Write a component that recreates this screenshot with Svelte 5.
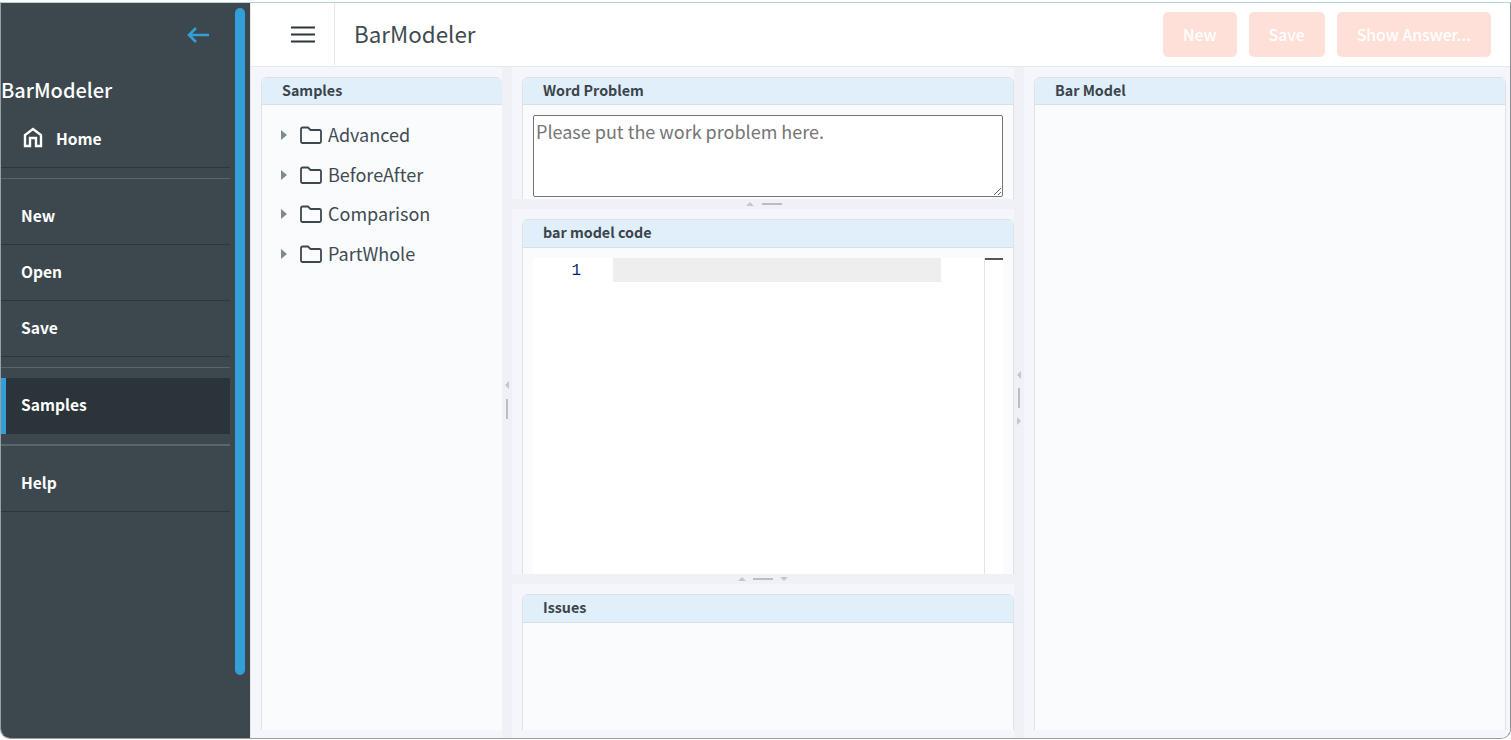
<script>
  const menuTop = ["New", "Open", "Save"];
  const samples = ["Advanced", "BeforeAfter", "Comparison", "PartWhole"];
  const actions = ["New", "Save", "Show Answer..."];
  let problem = $state("");
</script>

<div class="frame">
  <aside class="sidebar">
    <div class="scroll-thumb"></div>
    <div class="side-top">
      <svg width="24" height="18" viewBox="0 0 24 18" fill="none" stroke="#329fd9" stroke-width="2.6">
        <path d="M23 9H3M10 2 3 9l7 7" />
      </svg>
    </div>
    <h2 class="brand">BarModeler</h2>
    <a class="item home" href="#home">
      <svg width="20" height="21" viewBox="0 0 20 21" fill="none" stroke="#fff" stroke-width="2.400">
        <path d="M2 19V8l8-6 8 6v11h-5v-8H7v8z" />
      </svg>
      Home
    </a>
    <hr class="sep" />
    {#each menuTop as label}
      <a class="item" href="#menu">{label}</a>
    {/each}
    <hr class="sep" />
    <a class="item active" href="#samples">Samples</a>
    <hr class="sep thick" />
    <a class="item" href="#help">Help</a>
  </aside>

  <div class="main">
    <header class="topbar">
      <button class="burger" aria-label="Toggle menu">
        <svg width="24" height="17" viewBox="0 0 24 17" fill="none" stroke="#2c363b" stroke-width="2.200">
          <path d="M0 1.500h24M0 8.500h24M0 15.500h24" />
        </svg>
      </button>
      <div class="title">BarModeler</div>
      <div class="actions">
        {#each actions as label}
          <button class="action" disabled>{label}</button>
        {/each}
      </div>
    </header>

    <div class="workspace">
      <section class="pane left">
        <div class="panel">
          <div class="panel-head">Samples</div>
          <ul class="tree">
            {#each samples as name}
              <li>
                <span class="caret"></span>
                <svg width="22" height="18" viewBox="0 0 22 18" fill="none" stroke="#3d474d" stroke-width="1.800">
                  <path d="M2.500 1.500h5.500l2.500 2.500h9a1.500 1.500 0 0 1 1.500 1.500v10a1.500 1.500 0 0 1-1.500 1.500h-17a1.500 1.500 0 0 1-1.500-1.500v-12.500a1.500 1.500 0 0 1 1.500-1.500z" />
                </svg>
                <span class="tree-label">{name}</span>
              </li>
            {/each}
          </ul>
        </div>
      </section>

      <div class="gutter-v">
        <span class="tri-left"></span>
        <span class="grip-v"></span>
      </div>

      <section class="pane-stack">
        <div class="stack-cell word">
          <div class="panel">
            <div class="panel-head">Word Problem</div>
            <div class="word-body">
              <textarea bind:value={problem} placeholder="Please put the work problem here."></textarea>
            </div>
          </div>
        </div>
        <div class="gutter-h first">
          <span class="tri-up"></span>
          <span class="grip-h"></span>
        </div>
        <div class="stack-cell code">
          <div class="panel">
            <div class="panel-head tall">bar model code</div>
            <div class="code-body">
              <div class="editor">
                <div class="line-no">1</div>
                <div class="code-area"><div class="current-line"></div></div>
                <div class="minimap"></div>
              </div>
            </div>
          </div>
        </div>
        <div class="gutter-h">
          <span class="tri-up"></span>
          <span class="grip-h"></span>
          <span class="tri-down"></span>
        </div>
        <div class="stack-cell issues">
          <div class="panel">
            <div class="panel-head tall">Issues</div>
          </div>
        </div>
      </section>

      <div class="gutter-v right-gutter">
        <span class="tri-left"></span>
        <span class="grip-v"></span>
        <span class="tri-right"></span>
      </div>

      <section class="pane right">
        <div class="panel">
          <div class="panel-head">Bar Model</div>
        </div>
      </section>
    </div>
  </div>
</div>

<style>
  :global(body) {
    background: #fff;
    overflow: hidden;
  }

  .frame {
    box-sizing: border-box;
    display: flex;
    height: 737px;
    margin-top: 2px;
    border-top: 1px solid #b4d8d8;
    border-left: 1px solid #9a9fa3;
    border-right: 1px solid #8a8f93;
    border-bottom: 1px solid #9a9fa3;
    border-radius: 0 0 10px 10px;
    overflow: hidden;
    font-family: "Noto Sans CJK SC", "Noto Sans", sans-serif;
  }

  /* sidebar */
  .sidebar {
    position: relative;
    flex: 0 0 249px;
    box-sizing: border-box;
    padding-right: 20px;
    background: #3c484e;
    color: #fff;
  }

  .scroll-thumb {
    position: absolute;
    left: 234px;
    top: 5px;
    width: 10px;
    height: 667px;
    border-radius: 5px;
    background: #329fd9;
  }

  .side-top {
    display: flex;
    justify-content: flex-end;
    height: 65px;
    padding: 23px 20px 0 0;
    box-sizing: border-box;
  }

  .brand {
    margin: 0;
    height: 44px;
    font-size: 20px;
    font-weight: 500;
    line-height: 43px;
  }

  .item {
    display: flex;
    align-items: center;
    gap: 13px;
    box-sizing: border-box;
    height: 56px;
    padding: 0 0 4px 20px;
    border-bottom: 1px solid #2c363b;
    color: #fff;
    font-size: 15.600px;
    font-weight: 700;
    text-decoration: none;
  }

  .home {
    padding-left: 22px;
  }

  .active {
    padding-left: 15px;
    border-bottom: 0;
    border-left: 5px solid #329fd9;
    background: #2a3439;
  }

  .sep {
    margin: 10px 0;
    border: 0;
    height: 1px;
    background: #5b666b;
  }

  .thick {
    height: 2px;
  }

  /* main area */
  .main {
    flex: 1;
    display: flex;
    flex-direction: column;
    min-width: 0;
    border-left: 1px solid #e4e6ea;
    background: #f5f6fb;
  }

  .topbar {
    flex: 0 0 64px;
    box-sizing: border-box;
    display: flex;
    align-items: center;
    padding-bottom: 1px;
    background: #fff;
    border-bottom: 1px solid #e6e8ec;
  }

  .burger {
    flex: 0 0 84px;
    box-sizing: border-box;
    align-self: stretch;
    display: flex;
    align-items: center;
    justify-content: center;
    padding: 0 0 0 20px;
    background: none;
    border: 0;
    border-right: 1px solid #e6e8ec;
  }

  .title {
    flex: 1;
    padding: 0 0 2px 19px;
    color: #3f4b52;
    font-size: 22.400px;
  }

  .actions {
    display: flex;
    gap: 12px;
    padding-right: 19px;
  }

  .action {
    height: 45px;
    padding: 0 20px;
    border: 0;
    border-radius: 5px;
    background: #fee0d8;
    color: #fff;
    font-family: inherit;
    font-size: 15.800px;
    font-weight: 500;
  }

  .workspace {
    flex: 1;
    display: flex;
    min-height: 0;
  }

  .pane {
    box-sizing: border-box;
    padding: 10px 0 8px;
  }

  .left {
    flex: 0 0 251px;
    padding-left: 10px;
  }

  .right {
    flex: 1;
    padding-left: 10px;
    padding-right: 4px;
  }

  .panel {
    display: flex;
    flex-direction: column;
    height: 100%;
    box-sizing: border-box;
    background: #fafbfd;
    border-left: 1px solid #dfe2e6;
    border-right: 1px solid #dfe2e6;
    border-radius: 6px 6px 0 0;
    overflow: hidden;
  }

  .left .panel {
    border-right: 0;
  }

  .panel-head {
    flex: 0 0 28px;
    box-sizing: border-box;
    padding-left: 20px;
    background: #e1effb;
    border-top: 1px solid #dde1e6;
    border-bottom: 1px solid #d9dfe5;
    color: #3b444b;
    font-size: 14.300px;
    font-weight: 700;
    line-height: 24px;
  }

  .tall {
    flex-basis: 29px;
  }

  .tree {
    margin: 0;
    padding: 10px 0 0 19px;
    list-style: none;
    color: #3f4b52;
    font-size: 18px;
  }

  .tree li {
    display: flex;
    align-items: center;
    height: 39.700px;
  }

  .tree-label {
    padding-bottom: 2px;
  }

  .caret {
    width: 0;
    height: 0;
    margin-right: 13px;
    border-left: 6px solid #7d8a90;
    border-top: 5px solid transparent;
    border-bottom: 5px solid transparent;
  }

  .tree svg {
    margin-right: 6px;
  }

  /* splitters */
  .gutter-v {
    flex: 0 0 10px;
    display: flex;
    flex-direction: column;
    align-items: center;
    justify-content: center;
    gap: 10px;
    padding-bottom: 6px;
    box-sizing: border-box;
    background: #f0f1f6;
  }

  .right-gutter {
    gap: 9px;
    padding-bottom: 10px;
  }

  .grip-v {
    width: 2px;
    height: 20px;
    background: #bbbdc2;
  }

  .tri-left {
    border-right: 4px solid #c5c7cb;
    border-top: 4px solid transparent;
    border-bottom: 4px solid transparent;
  }

  .tri-right {
    border-left: 4px solid #c5c7cb;
    border-top: 4px solid transparent;
    border-bottom: 4px solid transparent;
  }

  .pane-stack {
    flex: 0 0 502px;
    display: flex;
    flex-direction: column;
    background: #f5f6fb;
  }

  .stack-cell {
    box-sizing: border-box;
    padding: 10px 0 0 10px;
    min-height: 0;
  }

  .word {
    flex: 0 0 132px;
  }

  .code {
    flex: 0 0 365px;
  }

  .issues {
    flex: 1;
    padding-bottom: 8px;
  }

  .gutter-h {
    flex: 0 0 10px;
    display: flex;
    align-items: center;
    justify-content: center;
    gap: 7px;
    background: #f0f1f6;
  }

  .first {
    gap: 8px;
    padding-left: 2px;
  }

  .grip-h {
    width: 20px;
    height: 2px;
    background: #bbbdc2;
  }

  .tri-up {
    border-bottom: 4px solid #c5c7cb;
    border-left: 4px solid transparent;
    border-right: 4px solid transparent;
  }

  .tri-down {
    border-top: 4px solid #c5c7cb;
    border-left: 4px solid transparent;
    border-right: 4px solid transparent;
  }

  .word-body {
    flex: 1;
    padding: 10px 10px 0;
  }

  textarea {
    display: block;
    box-sizing: border-box;
    width: 100%;
    height: 82px;
    padding: 5px 2px;
    border: 1px solid #767676;
    border-radius: 2px;
    outline: none;
    font-family: inherit;
    font-size: 18px;
    line-height: 1.2;
  }

  textarea::placeholder {
    color: #757575;
  }

  .code-body {
    flex: 1;
    min-height: 0;
    padding: 10px 10px 0;
  }

  .editor {
    display: flex;
    height: 100%;
    background: #fff;
  }

  .line-no {
    flex: 0 0 48px;
    height: 24px;
    color: #0a1f80;
    font-family: "Liberation Mono", monospace;
    font-size: 16px;
    line-height: 27px;
    text-align: right;
  }

  .code-area {
    flex: 1;
    padding-left: 32px;
  }

  .current-line {
    width: 328px;
    height: 24px;
    background: #eeeeee;
  }

  .minimap {
    flex: 0 0 19px;
    box-sizing: border-box;
    border-left: 1px solid #e5e5e5;
    background: linear-gradient(#555, #555) no-repeat 0 0 / 100% 2px;
  }
</style>
